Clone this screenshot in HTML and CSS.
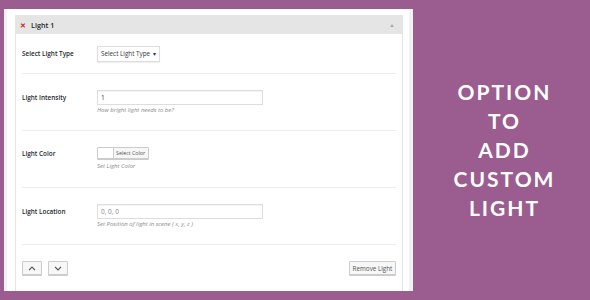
FILE: index.html
```html
<!DOCTYPE html>
<html>
<head>
<meta charset="utf-8">
<link rel="stylesheet" href="styles.css">
</head>
<body>
<div class="page">
  <div class="panel">
    <div class="box">
      <div class="box-head">
        <span class="close">&#x2715;</span>
        <span class="title">Light 1</span>
        <span class="toggle"></span>
      </div>
      <div class="row row-first">
        <div class="label">Select Light Type</div>
        <div class="field">
          <div class="select">Select Light Type <span class="caret">&#9662;</span></div>
        </div>
      </div>
      <div class="row">
        <div class="label label-input">Light Intensity</div>
        <div class="field">
          <div class="input">1</div>
          <div class="help">How bright light needs to be?</div>
        </div>
      </div>
      <div class="row">
        <div class="label label-color">Light Color</div>
        <div class="field">
          <div class="color-btn"><span class="swatch"></span><span class="color-text">Select Color</span></div>
          <div class="help">Set Light Color</div>
        </div>
      </div>
      <div class="row">
        <div class="label label-input">Light Location</div>
        <div class="field">
          <div class="input placeholder">0, 0, 0</div>
          <div class="help">Set Position of light in scene ( x, y, z )</div>
        </div>
      </div>
      <div class="footer">
        <div class="arrows">
          <div class="btn btn-icon">
            <svg width="8" height="5" viewBox="0 0 8 5"><path d="M1 4.2 L4 1.2 L7 4.2" fill="none" stroke="#555" stroke-width="1.2"/></svg>
          </div>
          <div class="btn btn-icon">
            <svg width="8" height="5" viewBox="0 0 8 5"><path d="M1 0.8 L4 3.8 L7 0.8" fill="none" stroke="#555" stroke-width="1.2"/></svg>
          </div>
        </div>
        <div class="btn btn-text">Remove Light</div>
      </div>
    </div>
  </div>
  <div class="promo">
    <div>OPTION</div>
    <div>TO</div>
    <div>ADD</div>
    <div>CUSTOM</div>
    <div>LIGHT</div>
  </div>
</div>
</body>
</html>
```
FILE: styles.css
```css
* { box-sizing: border-box; }
html, body { margin: 0; padding: 0; }
body {
  width: 590px;
  height: 300px;
  background: #9b5c8f;
  font-family: "Open Sans", "Liberation Sans", sans-serif;
  color: #23282d;
  overflow: hidden;
}
.page {
  display: flex;
  height: 300px;
}
.panel {
  margin: 9px 0 0 4px;
  width: 409px;
  height: 282px;
  background: #fff;
  border-left: 3px solid #f1f1f1;
  border-right: 4px solid #f1f1f1;
  padding: 6px 6px 0 8px;
  display: flex;
}
.box {
  flex: 1;
  border: 1px solid #e5e5e5;
  border-bottom: none;
  display: flex;
  flex-direction: column;
}
.box-head {
  height: 18px;
  background: #e5e5e5;
  display: flex;
  align-items: center;
  padding: 0 8px 0 4px;
}
.close {
  color: #c62828;
  font-size: 7px;
  font-weight: 700;
  width: 10px;
}
.title {
  font-size: 7.2px;
  font-weight: 600;
  color: #23282d;
  flex: 1;
  padding-left: 1px;
}
.toggle {
  width: 0;
  height: 0;
  border-left: 2.5px solid transparent;
  border-right: 2.5px solid transparent;
  border-bottom: 3px solid #aaa;
}
.row {
  margin: 0 6px;
  border-bottom: 1px solid #eeeeee;
  display: flex;
  align-items: flex-start;
  padding-top: 16px;
  height: 57px;
}
.row-first {
  height: 40px;
  padding-top: 12px;
}
.label {
  width: 75px;
  font-size: 6.4px;
  font-weight: 600;
  line-height: 16px;
  color: #23282d;
}
.label-input { line-height: 15px; }
.label-color { line-height: 13px; }
.field {
  display: flex;
  flex-direction: column;
  align-items: flex-start;
}
.select {
  height: 16px;
  width: 63px;
  border: 1px solid #ddd;
  box-shadow: 0 1px 1px rgba(0,0,0,0.06);
  font-size: 6.3px;
  line-height: 14px;
  padding-left: 3px;
  color: #32373c;
  white-space: nowrap;
}
.caret { font-size: 5.5px; margin-left: 1px; }
.input {
  width: 166px;
  height: 15px;
  border: 1px solid #ddd;
  box-shadow: inset 0 1px 1px rgba(0,0,0,0.05);
  font-size: 6.5px;
  line-height: 13px;
  padding-left: 3px;
  color: #32373c;
}
.placeholder { color: #888; }
.help {
  font-size: 6px;
  font-style: italic;
  color: #8a8a8a;
  margin-top: 1px;
  line-height: 8px;
}
.color-btn {
  display: flex;
  height: 12px;
  border: 1px solid #ccc;
  border-radius: 1px;
  background: #f7f7f7;
  box-shadow: 0 1px 0 #ccc;
}
.swatch {
  width: 16px;
  background: #fff;
  border-right: 1px solid #ccc;
}
.color-text {
  font-size: 5.3px;
  line-height: 10px;
  padding: 0 3px 0 2px;
  color: #555;
}
.label-color + .field .help { margin-top: 3px; }
.footer {
  flex: 1;
  display: flex;
  justify-content: space-between;
  align-items: flex-start;
  padding: 16px 6px 0 6px;
}
.arrows {
  display: flex;
  gap: 6px;
}
.btn {
  height: 14px;
  border: 1px solid #ccc;
  background: #f7f7f7;
  box-shadow: 0 1px 0 #ccc;
  border-radius: 1px;
  display: flex;
  align-items: center;
  justify-content: center;
}
.btn-icon { width: 20px; }
.btn-text {
  width: 47px;
  font-size: 6.3px;
  color: #555;
}
.promo {
  flex: 1;
  padding: 77px 0 0 6px;
  display: flex;
  flex-direction: column;
  align-items: center;
  color: #fff;
  font-family: "Lato", "DejaVu Sans", sans-serif;
  font-weight: 700;
  font-size: 21px;
  line-height: 29px;
  letter-spacing: 2px;
}
```
